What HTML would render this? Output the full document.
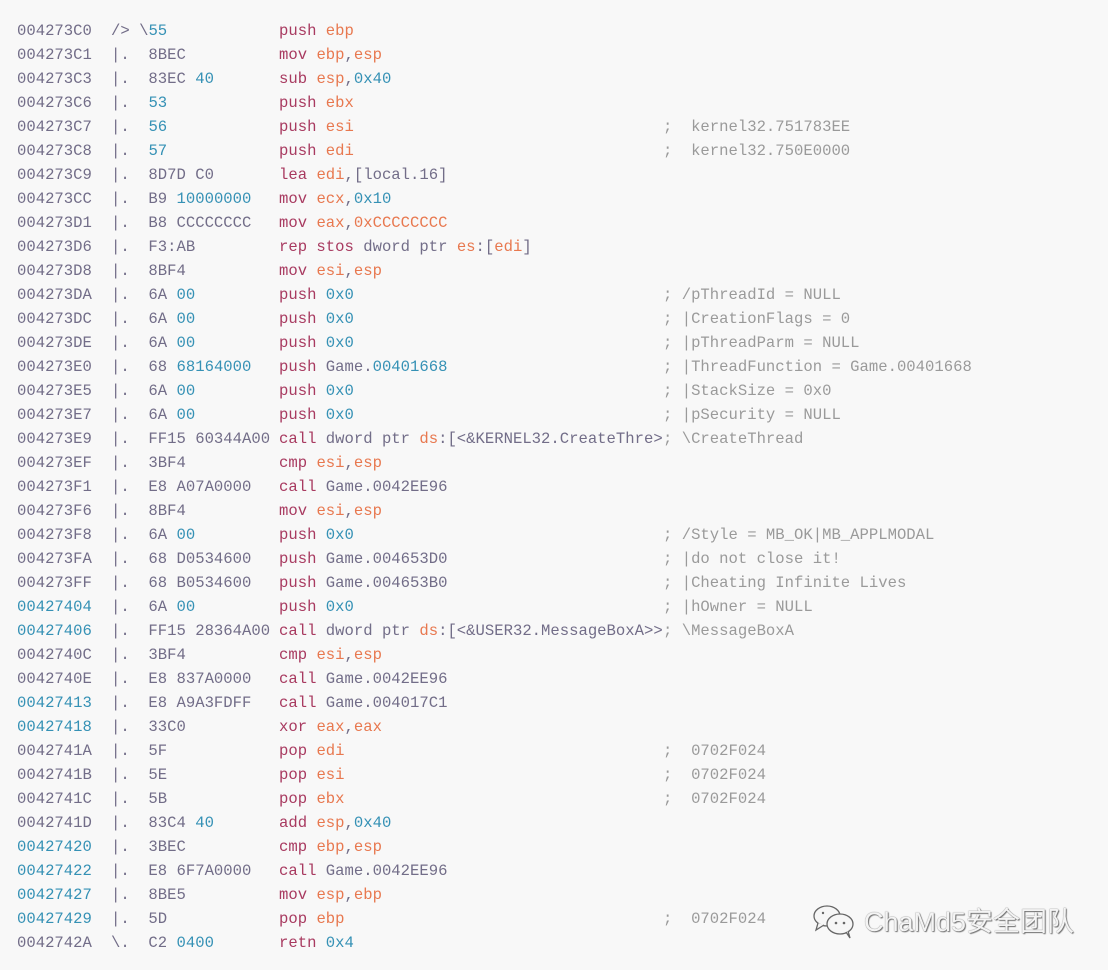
<!DOCTYPE html>
<html><head><meta charset="utf-8"><style>
body{margin:0;width:1108px;height:970px;background:#f8f8f8;overflow:hidden;font-family:"Liberation Mono",monospace;font-size:15.6px;color:#726d88}
.l{position:absolute;left:0;height:24px;line-height:24px;white-space:pre;width:1108px;margin-top:1px}
.l span{position:absolute}
.a{left:17px}.b{left:111px}.i{left:279px}.c{left:663px;color:#9a9a9a}
.n{color:#3591b5}.m{color:#a83a60}.r{color:#e8784f}
.i span,.b span,.a span{position:static}
.logo{position:absolute;left:812px;top:900px;font-family:"Liberation Sans","Noto Sans CJK SC",sans-serif;font-size:27px;color:#f4f4f4;text-shadow:0 0 1px #555,1px 1px 1px #777;white-space:nowrap}
</style></head><body>
<div class="l" style="top:18px"><span class="a">004273C0</span><span class="b">/&gt; \<span class="n">55</span></span><span class="i"><span class="m">push</span> <span class="r">ebp</span></span></div>
<div class="l" style="top:42px"><span class="a">004273C1</span><span class="b">|.  8BEC</span><span class="i"><span class="m">mov</span> <span class="r">ebp</span>,<span class="r">esp</span></span></div>
<div class="l" style="top:66px"><span class="a">004273C3</span><span class="b">|.  83EC <span class="n">40</span></span><span class="i"><span class="m">sub</span> <span class="r">esp</span>,<span class="n">0x40</span></span></div>
<div class="l" style="top:90px"><span class="a">004273C6</span><span class="b">|.  <span class="n">53</span></span><span class="i"><span class="m">push</span> <span class="r">ebx</span></span></div>
<div class="l" style="top:114px"><span class="a">004273C7</span><span class="b">|.  <span class="n">56</span></span><span class="i"><span class="m">push</span> <span class="r">esi</span></span><span class="c">;  kernel32.751783EE</span></div>
<div class="l" style="top:138px"><span class="a">004273C8</span><span class="b">|.  <span class="n">57</span></span><span class="i"><span class="m">push</span> <span class="r">edi</span></span><span class="c">;  kernel32.750E0000</span></div>
<div class="l" style="top:162px"><span class="a">004273C9</span><span class="b">|.  8D7D C0</span><span class="i"><span class="m">lea</span> <span class="r">edi</span>,[local.16]</span></div>
<div class="l" style="top:186px"><span class="a">004273CC</span><span class="b">|.  B9 <span class="n">10000000</span></span><span class="i"><span class="m">mov</span> <span class="r">ecx</span>,<span class="n">0x10</span></span></div>
<div class="l" style="top:210px"><span class="a">004273D1</span><span class="b">|.  B8 CCCCCCCC</span><span class="i"><span class="m">mov</span> <span class="r">eax</span>,<span class="r">0xCCCCCCCC</span></span></div>
<div class="l" style="top:234px"><span class="a">004273D6</span><span class="b">|.  F3:AB</span><span class="i"><span class="m">rep stos</span> dword ptr <span class="r">es</span>:[<span class="r">edi</span>]</span></div>
<div class="l" style="top:258px"><span class="a">004273D8</span><span class="b">|.  8BF4</span><span class="i"><span class="m">mov</span> <span class="r">esi</span>,<span class="r">esp</span></span></div>
<div class="l" style="top:282px"><span class="a">004273DA</span><span class="b">|.  6A <span class="n">00</span></span><span class="i"><span class="m">push</span> <span class="n">0x0</span></span><span class="c">; /pThreadId = NULL</span></div>
<div class="l" style="top:306px"><span class="a">004273DC</span><span class="b">|.  6A <span class="n">00</span></span><span class="i"><span class="m">push</span> <span class="n">0x0</span></span><span class="c">; |CreationFlags = 0</span></div>
<div class="l" style="top:330px"><span class="a">004273DE</span><span class="b">|.  6A <span class="n">00</span></span><span class="i"><span class="m">push</span> <span class="n">0x0</span></span><span class="c">; |pThreadParm = NULL</span></div>
<div class="l" style="top:354px"><span class="a">004273E0</span><span class="b">|.  68 <span class="n">68164000</span></span><span class="i"><span class="m">push</span> Game.<span class="n">00401668</span></span><span class="c">; |ThreadFunction = Game.00401668</span></div>
<div class="l" style="top:378px"><span class="a">004273E5</span><span class="b">|.  6A <span class="n">00</span></span><span class="i"><span class="m">push</span> <span class="n">0x0</span></span><span class="c">; |StackSize = 0x0</span></div>
<div class="l" style="top:402px"><span class="a">004273E7</span><span class="b">|.  6A <span class="n">00</span></span><span class="i"><span class="m">push</span> <span class="n">0x0</span></span><span class="c">; |pSecurity = NULL</span></div>
<div class="l" style="top:426px"><span class="a">004273E9</span><span class="b">|.  FF15 60344A00</span><span class="i"><span class="m">call</span> dword ptr <span class="r">ds</span>:[&lt;&amp;KERNEL32.CreateThre&gt;</span><span class="c">; \CreateThread</span></div>
<div class="l" style="top:450px"><span class="a">004273EF</span><span class="b">|.  3BF4</span><span class="i"><span class="m">cmp</span> <span class="r">esi</span>,<span class="r">esp</span></span></div>
<div class="l" style="top:474px"><span class="a">004273F1</span><span class="b">|.  E8 A07A0000</span><span class="i"><span class="m">call</span> Game.0042EE96</span></div>
<div class="l" style="top:498px"><span class="a">004273F6</span><span class="b">|.  8BF4</span><span class="i"><span class="m">mov</span> <span class="r">esi</span>,<span class="r">esp</span></span></div>
<div class="l" style="top:522px"><span class="a">004273F8</span><span class="b">|.  6A <span class="n">00</span></span><span class="i"><span class="m">push</span> <span class="n">0x0</span></span><span class="c">; /Style = MB_OK|MB_APPLMODAL</span></div>
<div class="l" style="top:546px"><span class="a">004273FA</span><span class="b">|.  68 D0534600</span><span class="i"><span class="m">push</span> Game.004653D0</span><span class="c">; |do not close it!</span></div>
<div class="l" style="top:570px"><span class="a">004273FF</span><span class="b">|.  68 B0534600</span><span class="i"><span class="m">push</span> Game.004653B0</span><span class="c">; |Cheating Infinite Lives</span></div>
<div class="l" style="top:594px"><span class="a n">00427404</span><span class="b">|.  6A <span class="n">00</span></span><span class="i"><span class="m">push</span> <span class="n">0x0</span></span><span class="c">; |hOwner = NULL</span></div>
<div class="l" style="top:618px"><span class="a n">00427406</span><span class="b">|.  FF15 28364A00</span><span class="i"><span class="m">call</span> dword ptr <span class="r">ds</span>:[&lt;&amp;USER32.MessageBoxA&gt;&gt;</span><span class="c">; \MessageBoxA</span></div>
<div class="l" style="top:642px"><span class="a">0042740C</span><span class="b">|.  3BF4</span><span class="i"><span class="m">cmp</span> <span class="r">esi</span>,<span class="r">esp</span></span></div>
<div class="l" style="top:666px"><span class="a">0042740E</span><span class="b">|.  E8 837A0000</span><span class="i"><span class="m">call</span> Game.0042EE96</span></div>
<div class="l" style="top:690px"><span class="a n">00427413</span><span class="b">|.  E8 A9A3FDFF</span><span class="i"><span class="m">call</span> Game.004017C1</span></div>
<div class="l" style="top:714px"><span class="a n">00427418</span><span class="b">|.  33C0</span><span class="i"><span class="m">xor</span> <span class="r">eax</span>,<span class="r">eax</span></span></div>
<div class="l" style="top:738px"><span class="a">0042741A</span><span class="b">|.  5F</span><span class="i"><span class="m">pop</span> <span class="r">edi</span></span><span class="c">;  0702F024</span></div>
<div class="l" style="top:762px"><span class="a">0042741B</span><span class="b">|.  5E</span><span class="i"><span class="m">pop</span> <span class="r">esi</span></span><span class="c">;  0702F024</span></div>
<div class="l" style="top:786px"><span class="a">0042741C</span><span class="b">|.  5B</span><span class="i"><span class="m">pop</span> <span class="r">ebx</span></span><span class="c">;  0702F024</span></div>
<div class="l" style="top:810px"><span class="a">0042741D</span><span class="b">|.  83C4 <span class="n">40</span></span><span class="i"><span class="m">add</span> <span class="r">esp</span>,<span class="n">0x40</span></span></div>
<div class="l" style="top:834px"><span class="a n">00427420</span><span class="b">|.  3BEC</span><span class="i"><span class="m">cmp</span> <span class="r">ebp</span>,<span class="r">esp</span></span></div>
<div class="l" style="top:858px"><span class="a n">00427422</span><span class="b">|.  E8 6F7A0000</span><span class="i"><span class="m">call</span> Game.0042EE96</span></div>
<div class="l" style="top:882px"><span class="a n">00427427</span><span class="b">|.  8BE5</span><span class="i"><span class="m">mov</span> <span class="r">esp</span>,<span class="r">ebp</span></span></div>
<div class="l" style="top:906px"><span class="a n">00427429</span><span class="b">|.  5D</span><span class="i"><span class="m">pop</span> <span class="r">ebp</span></span><span class="c">;  0702F024</span></div>
<div class="l" style="top:930px"><span class="a">0042742A</span><span class="b">\.  C2 <span class="n">0400</span></span><span class="i"><span class="m">retn</span> <span class="n">0x4</span></span></div>
<svg style="position:absolute;left:812px;top:903px" width="46" height="36" viewBox="0 0 46 36">
<g fill="#f6f6f6" stroke="#666" stroke-width="1.3">
<ellipse cx="15" cy="13" rx="13" ry="10"/><path d="M6 20 L4 27 L12 22"/>
<ellipse cx="28" cy="21" rx="13" ry="10"/><path d="M34 29 L38 35 L36 28"/>
</g>
<g fill="#666"><circle cx="24" cy="20" r="1.3"/><circle cx="32" cy="20" r="1.3"/><circle cx="11" cy="10" r="1.2"/></g>
</svg>
<div class="logo" style="left:864px">ChaMd5安全团队</div>
</body></html>
